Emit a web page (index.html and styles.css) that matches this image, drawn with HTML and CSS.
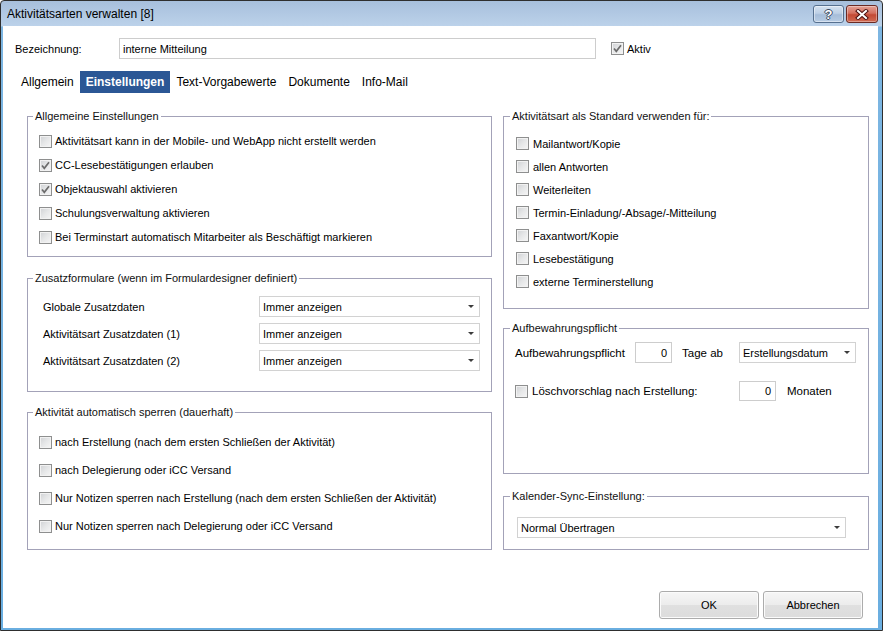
FILE: index.html
```html
<!DOCTYPE html>
<html lang="de">
<head>
<meta charset="utf-8">
<title>Aktivitätsarten verwalten</title>
<link rel="stylesheet" href="styles.css">
</head>
<body>
<div class="window">
  <div class="titlebar">
    <span class="title">Aktivitätsarten verwalten [8]</span>
    <div class="tbtns">
      <div class="tbtn help">?</div>
      <div class="tbtn close">
        <svg width="14" height="11" viewBox="0 0 14 11"><path d="M3 2 L11 9 M11 2 L3 9" stroke="#4a1010" stroke-width="4" stroke-linecap="square" fill="none"/><path d="M3 2 L11 9 M11 2 L3 9" stroke="#ffffff" stroke-width="2" stroke-linecap="square" fill="none"/></svg>
      </div>
    </div>
  </div>
  <div class="client">
    <div class="namerow">
      <span class="namelabel">Bezeichnung:</span>
      <div class="textbox name">interne Mitteilung</div>
      <div class="cb aktiv"><span class="box"><svg width="11" height="11" viewBox="0 0 11 11"><path d="M2 5.5 L4.3 8.3 L9 2.2" stroke="#6c6c6c" stroke-width="1.7" fill="none"/></svg></span>Aktiv</div>
    </div>
    <div class="tabs">
      <span class="tab">Allgemein</span>
      <span class="tab active">Einstellungen</span>
      <span class="tab">Text-Vorgabewerte</span>
      <span class="tab">Dokumente</span>
      <span class="tab">Info-Mail</span>
    </div>
    <div class="columns">
      <div class="col left">
        <fieldset class="group g1">
          <legend>Allgemeine Einstellungen</legend>
          <div class="cb row24"><span class="box"></span>Aktivitätsart kann in der Mobile- und WebApp nicht erstellt werden</div>
          <div class="cb row24"><span class="box"><svg width="11" height="11" viewBox="0 0 11 11"><path d="M2 5.5 L4.3 8.3 L9 2.2" stroke="#6c6c6c" stroke-width="1.7" fill="none"/></svg></span>CC-Lesebestätigungen erlauben</div>
          <div class="cb row24"><span class="box"><svg width="11" height="11" viewBox="0 0 11 11"><path d="M2 5.5 L4.3 8.3 L9 2.2" stroke="#6c6c6c" stroke-width="1.7" fill="none"/></svg></span>Objektauswahl aktivieren</div>
          <div class="cb row24"><span class="box"></span>Schulungsverwaltung aktivieren</div>
          <div class="cb row24"><span class="box"></span>Bei Terminstart automatisch Mitarbeiter als Beschäftigt markieren</div>
        </fieldset>
        <fieldset class="group g2">
          <legend>Zusatzformulare (wenn im Formulardesigner definiert)</legend>
          <div class="formrow"><span class="flabel">Globale Zusatzdaten</span><div class="select wide"><span>Immer anzeigen</span><i class="arrow"></i></div></div>
          <div class="formrow"><span class="flabel">Aktivitätsart Zusatzdaten (1)</span><div class="select wide"><span>Immer anzeigen</span><i class="arrow"></i></div></div>
          <div class="formrow"><span class="flabel">Aktivitätsart Zusatzdaten (2)</span><div class="select wide"><span>Immer anzeigen</span><i class="arrow"></i></div></div>
        </fieldset>
        <fieldset class="group g3">
          <legend>Aktivität automatisch sperren (dauerhaft)</legend>
          <div class="cb row28"><span class="box"></span>nach Erstellung (nach dem ersten Schließen der Aktivität)</div>
          <div class="cb row28"><span class="box"></span>nach Delegierung oder iCC Versand</div>
          <div class="cb row28"><span class="box"></span>Nur Notizen sperren nach Erstellung (nach dem ersten Schließen der Aktivität)</div>
          <div class="cb row28"><span class="box"></span>Nur Notizen sperren nach Delegierung oder iCC Versand</div>
        </fieldset>
      </div>
      <div class="col right">
        <fieldset class="group r1">
          <legend>Aktivitätsart als Standard verwenden für:</legend>
          <div class="cb row23"><span class="box"></span>Mailantwort/Kopie</div>
          <div class="cb row23"><span class="box"></span>allen Antworten</div>
          <div class="cb row23"><span class="box"></span>Weiterleiten</div>
          <div class="cb row23"><span class="box"></span>Termin-Einladung/-Absage/-Mitteilung</div>
          <div class="cb row23"><span class="box"></span>Faxantwort/Kopie</div>
          <div class="cb row23"><span class="box"></span>Lesebestätigung</div>
          <div class="cb row23"><span class="box"></span>externe Terminerstellung</div>
        </fieldset>
        <fieldset class="group r2">
          <legend>Aufbewahrungspflicht</legend>
          <div class="keeprow">
            <span class="klabel">Aufbewahrungspflicht</span>
            <div class="textbox num">0</div>
            <span class="tage">Tage ab</span>
            <div class="select date"><span>Erstellungsdatum</span><i class="arrow"></i></div>
          </div>
          <div class="keeprow second">
            <div class="cb dellabel"><span class="box"></span>Löschvorschlag nach Erstellung:</div>
            <div class="textbox num small">0</div>
            <span class="monaten">Monaten</span>
          </div>
        </fieldset>
        <fieldset class="group r3">
          <legend>Kalender-Sync-Einstellung:</legend>
          <div class="select sync"><span>Normal Übertragen</span><i class="arrow"></i></div>
        </fieldset>
      </div>
    </div>
    <div class="footer">
      <button class="btn">OK</button>
      <button class="btn">Abbrechen</button>
    </div>
  </div>
</div>
</body>
</html>
```
FILE: styles.css
```css
* { box-sizing: border-box; }
html, body { margin: 0; padding: 0; }
body {
  width: 883px;
  height: 631px;
  overflow: hidden;
  font-family: "Liberation Sans", Arial, sans-serif;
  font-size: 11px;
  color: #000;
  background: #fff;
}
.window {
  width: 883px;
  height: 631px;
  display: flex;
  flex-direction: column;
  border: 1px solid #2e2e2e;
  border-radius: 4px 4px 0 0;
  background: linear-gradient(to bottom, #a7bfdc 0, #bcd2ea 25px, #7db6e2 26px, #6aaee0 100%);
}
.titlebar {
  height: 25px;
  flex: none;
  display: flex;
  align-items: flex-start;
  padding: 0 4px 0 6px;
}
.title {
  font-size: 12px;
  line-height: 14px;
  margin-top: 6px;
  color: #000;
}
.tbtns {
  margin-left: auto;
  margin-top: 4px;
  display: flex;
  gap: 2px;
}
.tbtn {
  height: 18px;
  border-radius: 3px;
  display: flex;
  align-items: center;
  justify-content: center;
}
.help {
  width: 31px;
  border: 1px solid #56708f;
  background: linear-gradient(to bottom, #d5e2f0 0, #bdd0e6 45%, #a6bdd9 55%, #b7cce4 100%);
  box-shadow: inset 0 0 0 1px rgba(255,255,255,0.45);
  font-weight: bold;
  font-size: 13px;
  color: #fff;
  text-shadow: 1px 0 0 #3a4a60, -1px 0 0 #3a4a60, 0 1px 0 #3a4a60, 0 -1px 0 #3a4a60;
}
.close {
  width: 32px;
  border: 1px solid #6a2a24;
  background: linear-gradient(to bottom, #e3a195 0, #d4705f 45%, #c34a35 55%, #d06a52 100%);
  box-shadow: inset 0 0 0 1px rgba(255,255,255,0.35);
}
.client {
  flex: 1;
  margin: 0 4px 2px 2px;
  background: #fff;
  display: flex;
  flex-direction: column;
}
.namerow {
  display: flex;
  align-items: center;
  padding: 12px 0 0 12px;
}
.namelabel { width: 104px; }
.textbox {
  height: 21px;
  border: 1px solid #cdcdcd;
  background: #fff;
  display: flex;
  align-items: center;
  padding: 0 3px;
}
.name { width: 477px; }
.cb {
  display: flex;
  align-items: center;
  gap: 3px;
  white-space: nowrap;
}
.box {
  width: 13px;
  height: 13px;
  flex: none;
  border: 1px solid #8e8f8f;
  background: linear-gradient(135deg, #cfd1d4 0, #e6e7e8 50%, #f6f6f6 100%);
  box-shadow: inset 0 0 0 1px #f2f2f2;
  display: flex;
  align-items: center;
  justify-content: center;
}
.box svg { display: block; }
.aktiv { margin-left: 15px; }
.tabs {
  display: flex;
  margin: 12px 0 0 12px;
  height: 22px;
}
.tab {
  font-size: 12px;
  padding: 0 6px;
  line-height: 22px;
  color: #000;
}
.tab.active {
  background: #2b5795;
  color: #fff;
  font-weight: bold;
}
.columns {
  display: flex;
  gap: 11px;
  margin-top: 16px;
  padding-left: 24px;
}
.col { display: flex; flex-direction: column; }
.left { width: 465px; }
.right { width: 366px; }
.group {
  --pl: 11px;
  margin: 0;
  min-width: 0;
  border: 1px solid #a3a2b8;
  padding: 0 0 0 var(--pl);
}
.group legend {
  margin-left: calc(5px - var(--pl));
  padding: 0 2px;
  line-height: 14px;
  font-size: 11px;
  color: #111;
}
.g1 { padding-top: 6px; padding-bottom: 7px; }
.row24 { height: 24px; }
.g2 {
  --pl: 15px;
  margin-top: 14px;
  padding-top: 11px;
  padding-bottom: 20px;
  display: flex;
  flex-direction: column;
  gap: 6px;
}
.formrow { display: flex; align-items: center; height: 21px; }
.flabel { width: 216px; }
.select {
  height: 21px;
  border: 1px solid #d2d2d2;
  background: #fff;
  display: flex;
  align-items: center;
  justify-content: space-between;
  padding: 0 5px 0 3px;
}
.arrow {
  width: 0;
  height: 0;
  border-left: 3px solid transparent;
  border-right: 3px solid transparent;
  border-top: 3px solid #3c3c3c;
  margin-top: -1px;
}
.wide { width: 221px; }
.g3 { margin-top: 13px; padding-top: 9px; padding-bottom: 9px; }
.row28 { height: 28px; }
.r1 { --pl: 12px; padding-top: 9px; padding-bottom: 15px; }
.r1 legend { margin-left: -6px; }
.row23 { height: 23px; }
.r1 .cb { gap: 4px; }
.r2 { margin-top: 12px; padding-top: 7px; padding-bottom: 72px; }
.r2 legend, .r3 legend { margin-left: calc(6px - var(--pl)); }
.keeprow { display: flex; align-items: center; height: 21px; }
.keeprow.second { margin-top: 18px; height: 20px; }
.klabel { width: 120px; font-size: 11.5px; }
.num { width: 37px; justify-content: flex-end; padding-right: 4px; }
.num.small { height: 20px; }
.tage { width: 67px; padding-left: 10px; font-size: 11.5px; }
.date { width: 117px; }
.dellabel { width: 224px; gap: 4px; font-size: 11.5px; }
.monaten { margin-left: 11px; font-size: 11.5px; }
.r3 { --pl: 13px; margin-top: 15px; padding-top: 14px; padding-bottom: 11px; }
.sync { width: 329px; }
.footer {
  margin-top: auto;
  display: flex;
  justify-content: flex-end;
  gap: 4px;
  padding: 0 15px 9px 0;
}
.btn {
  width: 100px;
  height: 28px;
  font-family: "Liberation Sans", Arial, sans-serif;
  font-size: 11px;
  color: #000;
  border: 1px solid #acacac;
  border-radius: 3px;
  background: linear-gradient(to bottom, #f6f6f6 0, #ececec 50%, #e0e0e0 51%, #dcdcdc 100%);
  box-shadow: inset 0 0 0 1px #fbfbfb;
  padding: 0;
}
```
